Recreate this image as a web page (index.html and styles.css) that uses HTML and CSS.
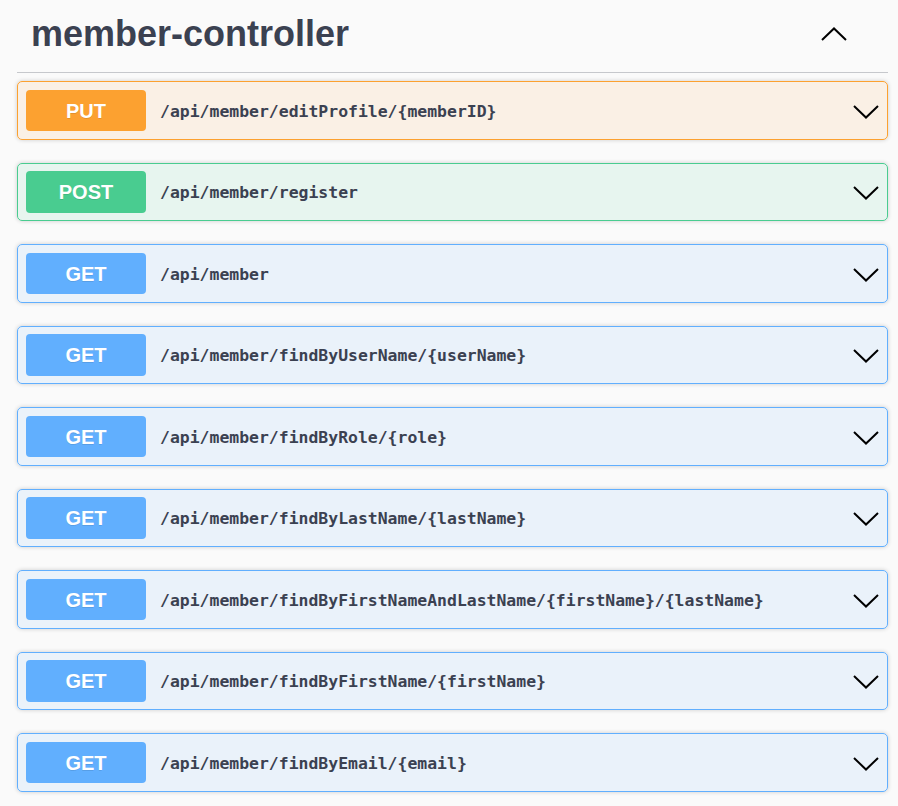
FILE: index.html
```html
<!DOCTYPE html>
<html lang="en">
<head>
<meta charset="utf-8">
<title>member-controller</title>
<link rel="stylesheet" href="styles.css">
</head>
<body>
<div class="tag-section">
  <div class="tag-header">
    <h4 class="tag-title">member-controller</h4>
    <svg class="arrow-up" width="26" height="14" viewBox="0 0 26 14"><path d="M1 13 L13 1.5 L25 13" fill="none" stroke="#000" stroke-width="2"/></svg>
  </div>
  <div class="ops">
    <div class="op op-put">
      <span class="method">PUT</span>
      <span class="path">/api/member/editProfile/{memberID}</span>
      <svg class="arrow-down" width="26" height="14" viewBox="0 0 26 14"><path d="M1 1 L13 12.5 L25 1" fill="none" stroke="#000" stroke-width="2"/></svg>
    </div>
    <div class="op op-post">
      <span class="method">POST</span>
      <span class="path">/api/member/register</span>
      <svg class="arrow-down" width="26" height="14" viewBox="0 0 26 14"><path d="M1 1 L13 12.5 L25 1" fill="none" stroke="#000" stroke-width="2"/></svg>
    </div>
    <div class="op op-get">
      <span class="method">GET</span>
      <span class="path">/api/member</span>
      <svg class="arrow-down" width="26" height="14" viewBox="0 0 26 14"><path d="M1 1 L13 12.5 L25 1" fill="none" stroke="#000" stroke-width="2"/></svg>
    </div>
    <div class="op op-get">
      <span class="method">GET</span>
      <span class="path">/api/member/findByUserName/{userName}</span>
      <svg class="arrow-down" width="26" height="14" viewBox="0 0 26 14"><path d="M1 1 L13 12.5 L25 1" fill="none" stroke="#000" stroke-width="2"/></svg>
    </div>
    <div class="op op-get">
      <span class="method">GET</span>
      <span class="path">/api/member/findByRole/{role}</span>
      <svg class="arrow-down" width="26" height="14" viewBox="0 0 26 14"><path d="M1 1 L13 12.5 L25 1" fill="none" stroke="#000" stroke-width="2"/></svg>
    </div>
    <div class="op op-get">
      <span class="method">GET</span>
      <span class="path">/api/member/findByLastName/{lastName}</span>
      <svg class="arrow-down" width="26" height="14" viewBox="0 0 26 14"><path d="M1 1 L13 12.5 L25 1" fill="none" stroke="#000" stroke-width="2"/></svg>
    </div>
    <div class="op op-get">
      <span class="method">GET</span>
      <span class="path">/api/member/findByFirstNameAndLastName/{firstName}/{lastName}</span>
      <svg class="arrow-down" width="26" height="14" viewBox="0 0 26 14"><path d="M1 1 L13 12.5 L25 1" fill="none" stroke="#000" stroke-width="2"/></svg>
    </div>
    <div class="op op-get">
      <span class="method">GET</span>
      <span class="path">/api/member/findByFirstName/{firstName}</span>
      <svg class="arrow-down" width="26" height="14" viewBox="0 0 26 14"><path d="M1 1 L13 12.5 L25 1" fill="none" stroke="#000" stroke-width="2"/></svg>
    </div>
    <div class="op op-get">
      <span class="method">GET</span>
      <span class="path">/api/member/findByEmail/{email}</span>
      <svg class="arrow-down" width="26" height="14" viewBox="0 0 26 14"><path d="M1 1 L13 12.5 L25 1" fill="none" stroke="#000" stroke-width="2"/></svg>
    </div>
  </div>
</div>
</body>
</html>
```

FILE: styles.css
```css
html, body {
  margin: 0;
  padding: 0;
  background: #fafafa;
  color: #3b4151;
  font-family: "Liberation Sans", Arial, sans-serif;
}

.tag-section {
  padding: 0 10px 0 17px;
}

.tag-header {
  display: flex;
  align-items: center;
  justify-content: space-between;
  height: 73px;
  padding-bottom: 4px;
  box-sizing: border-box;
  border-bottom: 1px solid #c6c8cc;
}

.tag-title {
  margin: 0;
  padding-left: 14px;
  font-size: 36px;
  line-height: 36px;
  font-weight: 700;
  color: #3b4151;
}

.arrow-up {
  margin-right: 41px;
  display: block;
}

.ops {
  padding-top: 8px;
}

.op {
  display: flex;
  align-items: center;
  border: 1px solid;
  border-radius: 5px;
  padding: 7.5px 8px;
  margin-bottom: 23px;
  box-shadow: 0 0 4px rgba(0, 0, 0, 0.19);
}

.op-put {
  background: rgba(252, 161, 48, 0.1);
  border-color: #fca130;
}

.op-post {
  background: rgba(73, 204, 144, 0.1);
  border-color: #49cc90;
}

.op-get {
  background: rgba(97, 175, 254, 0.1);
  border-color: #61affe;
}

.method {
  flex: none;
  width: 120px;
  height: 41.5px;
  box-sizing: border-box;
  padding-top: 2px;
  display: flex;
  align-items: center;
  justify-content: center;
  border-radius: 4px;
  color: #fff;
  font-family: "Liberation Sans", Arial, sans-serif;
  font-weight: 700;
  font-size: 20px;
  text-shadow: 0 1px 0 rgba(0, 0, 0, 0.1);
}

.op-put .method { background: #fca130; }
.op-post .method { background: #49cc90; }
.op-get .method { background: #61affe; }

.path {
  flex: 1;
  padding-left: 14px;
  padding-top: 2px;
  font-family: "DejaVu Sans Mono", "Liberation Mono", monospace;
  font-weight: 700;
  font-size: 16.45px;
  color: #3b4151;
  white-space: nowrap;
}

.arrow-down {
  flex: none;
  display: block;
  margin-top: 3px;
}
```
